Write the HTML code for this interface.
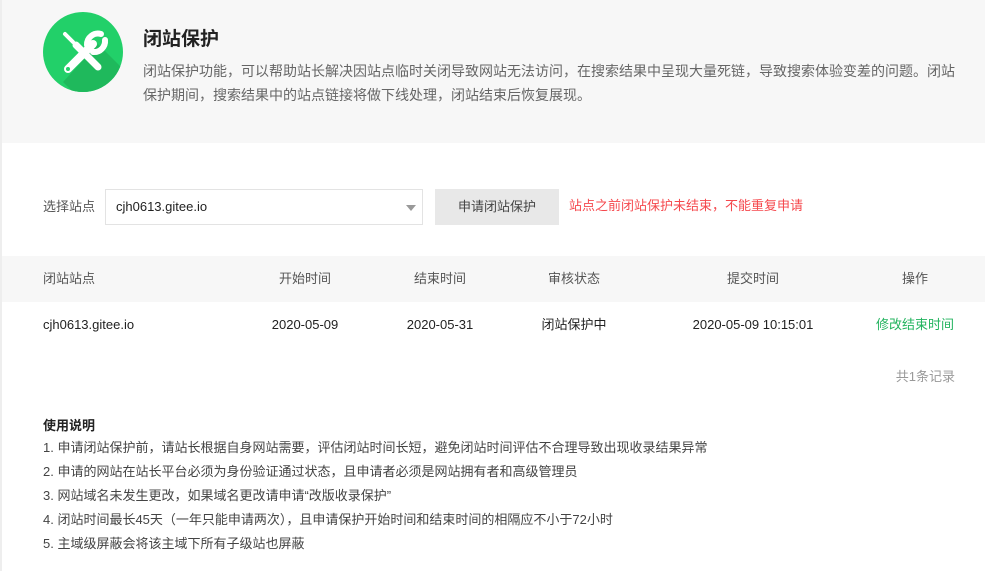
<html><head><style>
body{margin:0;width:985px;height:571px;background:#fff;font-family:"Liberation Sans","Noto Sans CJK SC",sans-serif;position:relative;overflow:hidden;color:#333}
.a{position:absolute;white-space:nowrap;line-height:16px}
.c{transform:translateX(-50%)}
</style></head><body>
<div class="a" style="left:0;top:0;width:2px;height:571px;background:#eee"></div>
<div class="a" style="left:2px;top:0;width:983px;height:143px;background:#f7f7f7"></div>
<svg class="a" style="left:43px;top:12px" width="80" height="80" viewBox="0 0 80 80">
<defs><clipPath id="cp"><circle cx="40" cy="40" r="40"/></clipPath></defs>
<circle cx="40" cy="40" r="40" fill="#22d069"/>
<path d="M55 32 L80 57 L80 80 L30 80 L20 70 Z" fill="#1fb95c" clip-path="url(#cp)"/>
<g stroke="#fff" stroke-linecap="round" fill="none">
<line x1="22" y1="22" x2="30" y2="30" stroke-width="4"/>
<line x1="33" y1="33" x2="55" y2="55" stroke-width="7"/>
<line x1="50" y1="32" x2="25" y2="57" stroke-width="8"/>
<path d="M44 33 A11 11 0 0 1 58 22" stroke-width="6"/>
<path d="M50 40 A11 11 0 0 0 62 28" stroke-width="6"/>
</g>
<circle cx="25" cy="57" r="2" fill="#22d069"/>
</svg>
<div class="a" style="left:143px;top:29px;font-size:19px;line-height:22px;font-weight:bold;color:#222">闭站保护</div>
<div class="a" style="left:143px;top:59px;font-size:14px;letter-spacing:0;line-height:24px;color:#666;white-space:normal;width:815px">闭站保护功能，可以帮助站长解决因站点临时关闭导致网站无法访问，在搜索结果中呈现大量死链，导致搜索体验变差的问题。闭站保护期间，搜索结果中的站点链接将做下线处理，闭站结束后恢复展现。</div>
<div class="a" style="left:43px;top:199px;font-size:13px;color:#555">选择站点</div>
<div class="a" style="left:105px;top:189px;width:316px;height:34px;border:1px solid #e3e3e3;background:#fff"></div>
<div class="a" style="left:116px;top:199px;font-size:13px;color:#222">cjh0613.gitee.io</div>
<div class="a" style="left:406px;top:205px;width:0;height:0;border-left:5px solid transparent;border-right:5px solid transparent;border-top:6px solid #999"></div>
<div class="a" style="left:435px;top:189px;width:124px;height:36px;background:#e8e8e8;font-size:13px;color:#444;text-align:center;line-height:36px">申请闭站保护</div>
<div class="a" style="left:569px;top:198px;font-size:13px;color:#f5484d">站点之前闭站保护未结束，不能重复申请</div>
<div class="a" style="left:2px;top:256px;width:983px;height:46px;background:#f7f7f7"></div>
<div class="a" style="left:43px;top:271px;font-size:13px;color:#555">闭站站点</div>
<div class="a c" style="left:305px;top:271px;font-size:13px;color:#555">开始时间</div>
<div class="a c" style="left:440px;top:271px;font-size:13px;color:#555">结束时间</div>
<div class="a c" style="left:574px;top:271px;font-size:13px;color:#555">审核状态</div>
<div class="a c" style="left:753px;top:271px;font-size:13px;color:#555">提交时间</div>
<div class="a c" style="left:915px;top:271px;font-size:13px;color:#555">操作</div>
<div class="a" style="left:43px;top:317px;font-size:13px;color:#222">cjh0613.gitee.io</div>
<div class="a c" style="left:305px;top:317px;font-size:13px;color:#222">2020-05-09</div>
<div class="a c" style="left:440px;top:317px;font-size:13px;color:#222">2020-05-31</div>
<div class="a c" style="left:574px;top:317px;font-size:13px;color:#222">闭站保护中</div>
<div class="a c" style="left:753px;top:317px;font-size:13px;color:#222">2020-05-09 10:15:01</div>
<div class="a c" style="left:915px;top:317px;font-size:13px;color:#22b35e">修改结束时间</div>
<div class="a" style="right:30px;top:369px;font-size:13px;color:#999">共1条记录</div>
<div class="a" style="left:43px;top:418px;font-size:13px;font-weight:bold;color:#222">使用说明</div>
<div class="a" style="left:43px;top:436px;font-size:13px;line-height:24px;color:#444">1. 申请闭站保护前，请站长根据自身网站需要，评估闭站时间长短，避免闭站时间评估不合理导致出现收录结果异常<br>2. 申请的网站在站长平台必须为身份验证通过状态，且申请者必须是网站拥有者和高级管理员<br>3. 网站域名未发生更改，如果域名更改请申请“改版收录保护”<br>4. 闭站时间最长45天（一年只能申请两次），且申请保护开始时间和结束时间的相隔应不小于72小时<br>5. 主域级屏蔽会将该主域下所有子级站也屏蔽</div>
</body></html>
